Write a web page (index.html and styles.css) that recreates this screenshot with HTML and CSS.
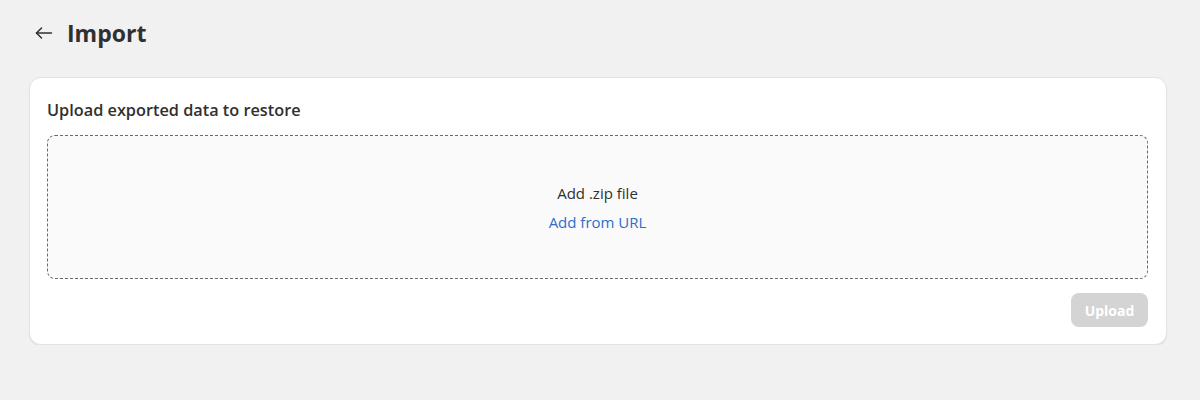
FILE: index.html
```html
<!DOCTYPE html>
<html lang="en">
<head>
<meta charset="utf-8">
<title>Import</title>
<link rel="stylesheet" href="styles.css">
</head>
<body>
<div class="page">
  <header class="page-header">
    <button class="back" aria-label="Back">
      <svg width="20" height="20" viewBox="0 0 20 20" fill="none" stroke="#303030" stroke-width="1.5" stroke-linecap="round" stroke-linejoin="round">
        <path d="M17.5 10H2.5"/>
        <path d="M7.5 5L2.5 10L7.5 15"/>
      </svg>
    </button>
    <h1 class="page-title">Import</h1>
  </header>
  <section class="card">
    <h2 class="card-title">Upload exported data to restore</h2>
    <div class="dropzone">
      <div class="dz-primary">Add .zip file</div>
      <a class="dz-link" href="#">Add from URL</a>
    </div>
    <div class="card-footer">
      <button class="btn-upload" disabled>Upload</button>
    </div>
  </section>
</div>
</body>
</html>
```

FILE: styles.css
```css
* { box-sizing: border-box; }
html, body { margin: 0; padding: 0; }
body {
  background: #f1f1f1;
  font-family: "Open Sans", "Noto Sans", sans-serif;
  color: #303030;
}
.page {
  padding: 18px 33px 0 29px;
}
.page-header {
  display: flex;
  align-items: center;
  gap: 13px;
  height: 30px;
  padding-left: 5px;
}
.back {
  border: 0;
  background: none;
  padding: 0;
  width: 20px;
  height: 20px;
  display: flex;
  align-items: center;
  justify-content: center;
  cursor: pointer;
}
.page-title {
  margin: 0;
  font-size: 23px;
  font-weight: 700;
  line-height: 30px;
  color: #303030;
}
.card {
  margin-top: 29px;
  background: #ffffff;
  border-radius: 12px;
  border: 1px solid #e3e3e3;
  box-shadow: 0 1px 1px rgba(0,0,0,0.08);
  padding: 20px 18px 17px 17px;
}
.card-title {
  margin: 0;
  font-size: 16.3px;
  font-weight: 600;
  line-height: 24px;
  color: #303030;
}
.dropzone {
  margin-top: 13px;
  height: 144px;
  border: 1px dashed #6b6b6b;
  border-radius: 8px;
  background: #fafafa;
  display: flex;
  flex-direction: column;
  align-items: center;
  justify-content: center;
  gap: 7px;
}
.dz-primary {
  font-size: 15px;
  line-height: 22px;
  color: #303030;
}
.dz-link {
  font-size: 15px;
  line-height: 22px;
  color: #2c6ecb;
  text-decoration: none;
}
.card-footer {
  display: flex;
  justify-content: flex-end;
  margin-top: 14px;
}
.btn-upload {
  width: 77px;
  height: 34px;
  border: 0;
  border-radius: 8px;
  background: #d4d4d4;
  color: #ffffff;
  font-family: "Open Sans", "Noto Sans", sans-serif;
  font-size: 14px;
  font-weight: 700;
}
```
